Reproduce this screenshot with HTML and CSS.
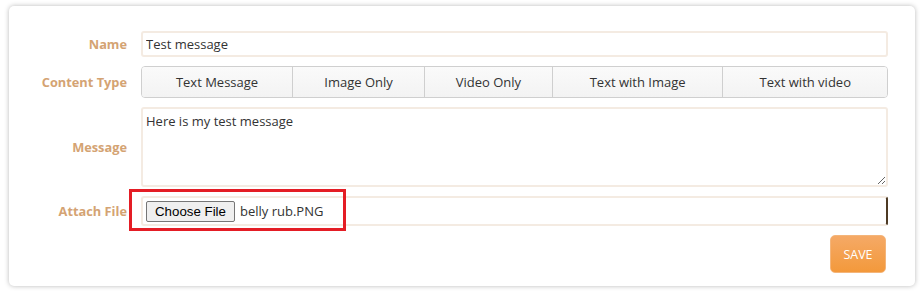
FILE: index.html
```html
<html>
<head>
  <link rel="stylesheet" href="styles.css">
</head>
<body>
<div class="card">
  <div class="row">
    <label class="label">Name</label>
    <div class="field">
      <input class="input input-name" type="text" value="Test message">
    </div>
  </div>
  <div class="row">
    <label class="label">Content Type</label>
    <div class="field">
      <div class="btn-group">
        <span class="btn">Text Message</span>
        <span class="btn">Image Only</span>
        <span class="btn">Video Only</span>
        <span class="btn">Text with Image</span>
        <span class="btn">Text with video</span>
      </div>
    </div>
  </div>
  <div class="row row-top">
    <label class="label label-mid">Message</label>
    <div class="field">
      <textarea class="input textarea">Here is my test message</textarea>
    </div>
  </div>
  <div class="row">
    <label class="label">Attach File</label>
    <div class="field file-field">
      <div class="input file-input">
        <span class="file-btn">Choose File</span>
        <span class="file-name">belly rub.PNG</span>
      </div>
      <!-- the red box drawn round the file picker -->
      <div class="highlight"></div>
    </div>
  </div>
  <div class="actions">
    <button class="save">SAVE</button>
  </div>
</div>
</body>
</html>
```

FILE: styles.css
```css
*{
  box-sizing: border-box;
}
body{
  margin:0;
  background:#fff;
  font-family: "Open Sans", "Noto Sans", sans-serif;
  font-size:13px;
  color:#333;
}

/* Our card */
.card{
  margin:6px 5px 6px 9px;
  height:280px;
  background:#fff;
  border-radius:5px;
  box-shadow: 0 0 5px rgba(0,0,0,0.28);
  padding:25px 27px 15px 0;
  display:flex;
  flex-direction:column;
  gap:9px;
}

.row{
  display:flex;
  align-items:center;
}
.label{
  width:118px;
  flex:none;
  text-align:right;
  font-weight:700;
  font-size:12.8px;
  color:#d4a373;
  margin-right:14px;
}
.field{
  flex:1;
  min-width:0;
}

/* Inputs */
.input{
  display:block;
  width:100%;
  border:2px solid #f4ebe2;
  border-radius:3px;
  background:#fff;
  font-family:inherit;
  font-size:13px;
  color:#333;
  outline:none;
}
.input-name{
  height:26px;
  padding:0 3px;
}
.textarea{
  height:80px;
  padding:3px 3px;
  resize:vertical;
  line-height:18px;
}

/* The button group, a table so wider labels get wider cells */
.btn-group{
  display:table;
  width:100%;
  height:32px;
  border:1px solid #cfcfcf;
  border-radius:4px;
  border-collapse:separate;
  border-spacing:0;
  overflow:hidden;
}
.btn{
  display:table-cell;
  vertical-align:middle;
  text-align:center;
  padding:0 12px;
  background:linear-gradient(#fafafa,#f3f3f3);
  border-left:1px solid #cfcfcf;
  color:#333;
  white-space:nowrap;
}
.btn:first-child{
  border-left:none;
}

/* File picker */
.file-field{
  position:relative;
}
.file-input{
  height:30px;
  display:flex;
  align-items:center;
  padding:0 3px;
  border-right-color:#4e3a24;
}
.file-btn{
  font-family:"Liberation Sans", Arial, sans-serif;
  font-size:13.3px;
  color:#000;
  background:#efefef;
  border:1px solid #767676;
  border-radius:2px;
  padding:1px 8px;
  height:21px;
  line-height:17px;
}
.file-name{
  margin-left:5px;
  font-size:13px;
  color:#333;
}
.highlight{
  position:absolute;
  left:-12px;
  top:-7px;
  width:217px;
  height:42px;
  border:3px solid #e41d25;
  pointer-events:none;
}

.actions{
  display:flex;
  justify-content:flex-end;
  padding-right:2px;
}
.save{
  width:56px;
  height:38px;
  border:1px solid #f4b57a;
  border-radius:5px;
  background:linear-gradient(#f5a966,#f3993b);
  color:#fff;
  font-family:inherit;
  font-size:12.5px;
}
```
